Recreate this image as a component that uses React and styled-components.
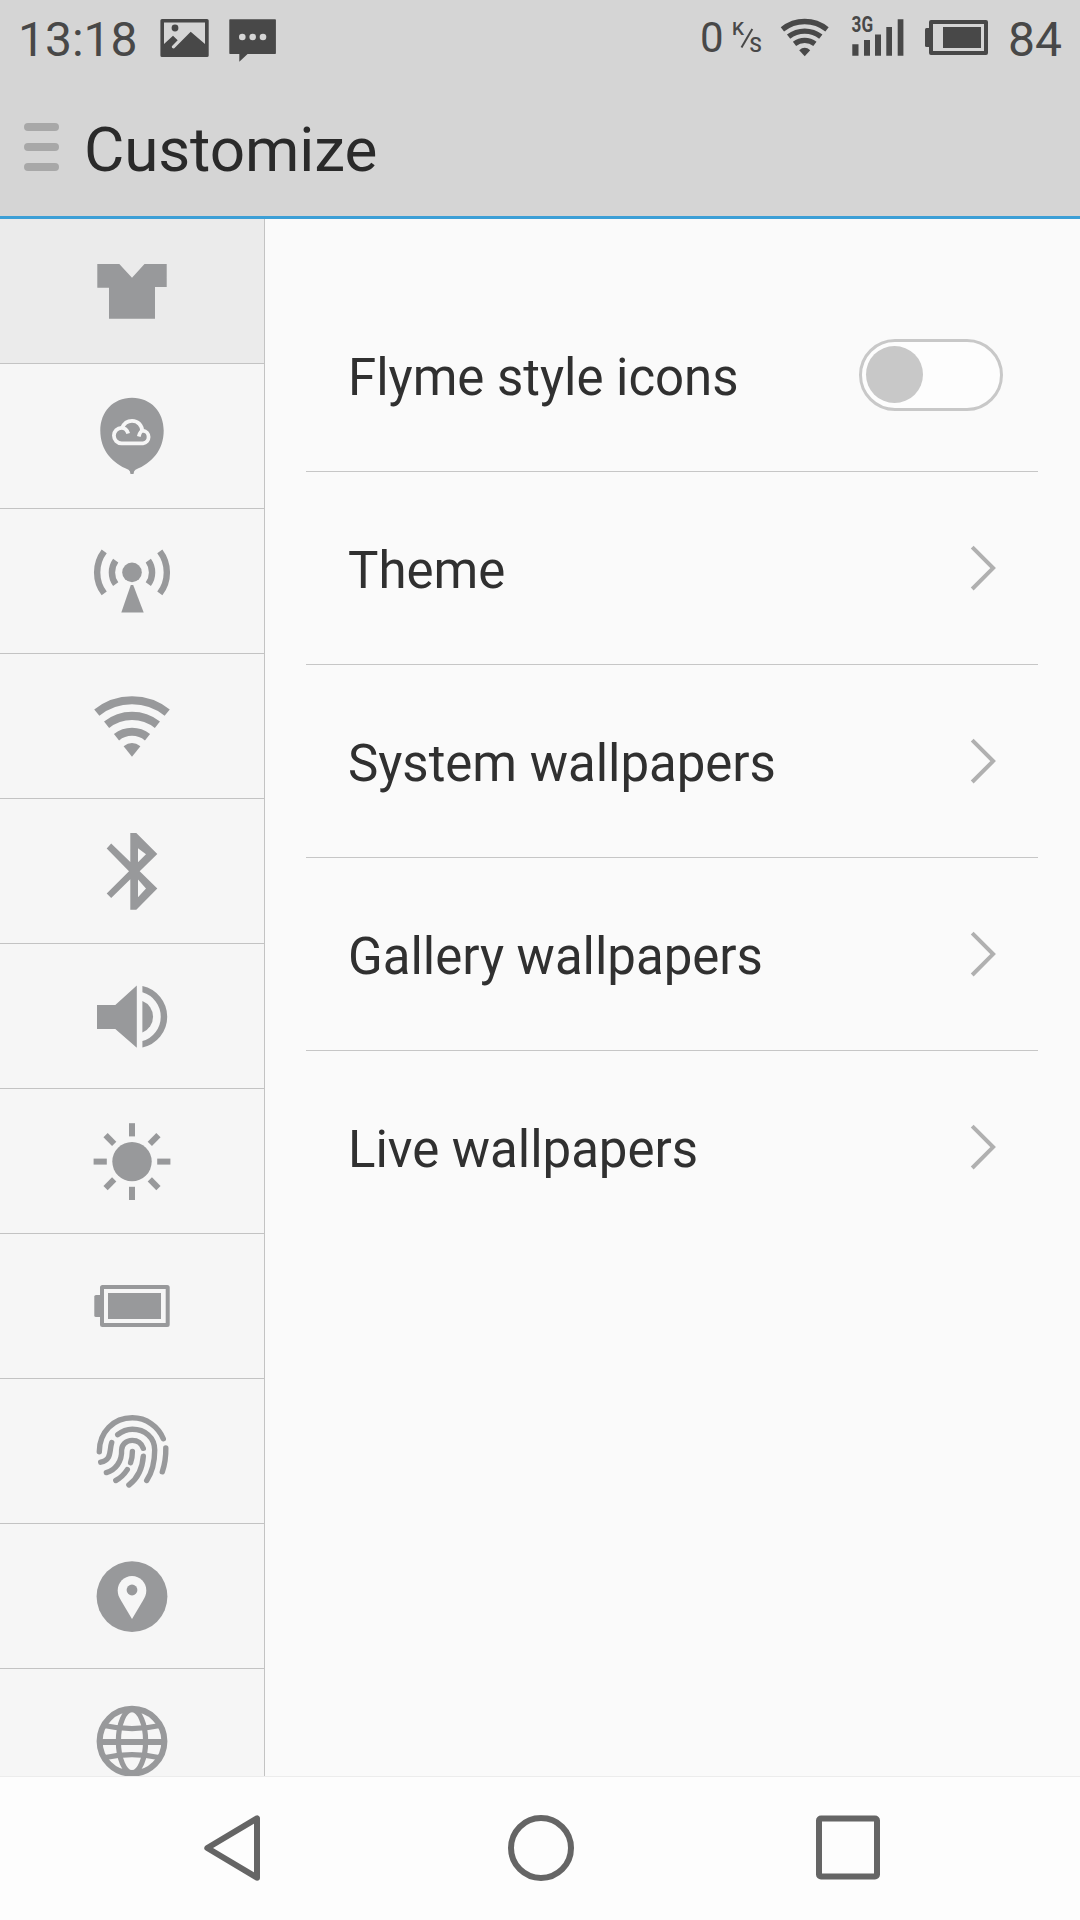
import React from "react";
import styled, { createGlobalStyle } from "styled-components";

const GlobalStyle = createGlobalStyle`
  *, *::before, *::after { box-sizing: border-box; }
  html, body { margin: 0; padding: 0; }
  body { font-family: Roboto, "Noto Sans", sans-serif; background: #fafafa; }
  svg { display: block; flex: none; overflow: visible; }
`;

const Screen = styled.div`
  display: flex;
  flex-direction: column;
  width: 1080px;
  height: 1920px;
  overflow: hidden;
  background: #fafafa;
`;

const Header = styled.header`
  flex: none;
  height: 219px;
  background: #d5d5d5;
  border-bottom: 3px solid #3c9fd6;
`;

const StatusBar = styled.div`
  display: flex;
  align-items: center;
  justify-content: space-between;
  height: 76px;
  padding: 0 18px;
  color: #484848;
`;

const StatusGroup = styled.div`
  display: flex;
  align-items: center;
`;

const StatusText = styled.span`
  font-size: ${(p) => p.$size || 48}px;
  line-height: 56px;
  padding-top: ${(p) => (p.$size ? 0 : 3)}px;
  width: ${(p) => p.$width}px;
  white-space: nowrap;
  text-align: ${(p) => p.$align || "left"};
`;

const StatusIcon = styled.svg.attrs({ fill: "currentColor" })`
  height: 48px;
  margin-right: ${(p) => p.$gap || 0}px;
`;

const SpeedUnit = styled.span`
  display: flex;
  height: 48px;
  width: 48px;
  font-size: 19px;
  line-height: 22px;
  font-weight: 500;
`;

const UnitTop = styled.span`
  padding-top: 4px;
  width: 13px;
`;

const Slash = styled.svg`
  width: 14px;
  height: 48px;
  margin-left: -5px;
`;

const UnitBottom = styled.span`
  align-self: flex-end;
  padding-bottom: 6px;
  margin-left: -4.5px;
  font-size: 20px;
`;

const Toolbar = styled.div`
  display: flex;
  align-items: center;
  gap: 24.5px;
  height: 140px;
  padding: 2px 0 0 24.4px;
`;

const MenuButton = styled.button`
  display: grid;
  gap: 12px;
  width: 35px;
  padding: 0;
  border: 0;
  background: none;
`;

const MenuBar = styled.span`
  height: 8px;
  border-radius: 4px;
  background: #a8a8a8;
`;

const Title = styled.h1`
  margin: 0;
  padding-top: 5px;
  font-size: 62px;
  line-height: 72px;
  font-weight: 400;
  letter-spacing: -0.1px;
  color: #2a2a2a;
`;

const Body = styled.div`
  display: flex;
  flex: none;
  height: 1557px;
  overflow: hidden;
`;

const Sidebar = styled.nav`
  flex: none;
  width: 265px;
  overflow: hidden;
  background: #f6f6f6;
  border-right: 1px solid #c3c3c3;
`;

const Tab = styled.div`
  display: flex;
  align-items: center;
  justify-content: center;
  height: 145px;
  border-bottom: 1px solid #c3c3c3;
  background: ${(p) => (p.$active ? "#ebebeb" : "transparent")};
  color: #98999b;
`;

const Panel = styled.main`
  flex: 1;
  padding: 60px 42px 0 41px;
`;

const Row = styled.div`
  display: flex;
  align-items: center;
  justify-content: space-between;
  height: 193px;
  padding: 0 35px 0 42px;
  border-bottom: 1px solid ${(p) => (p.$last ? "transparent" : "#c6c6c6")};
`;

const Label = styled.span`
  padding-top: 6px;
  font-size: 51px;
  line-height: 60px;
  letter-spacing: -0.03px;
  color: #303030;
  white-space: nowrap;
`;

const Toggle = styled.span`
  display: flex;
  align-items: center;
  width: 144px;
  height: 72px;
  padding: 0 4px 1px;
  border: 3px solid #c8c8c8;
  border-radius: 36px;
  background: #fdfdfd;
`;

const Knob = styled.span`
  width: 57px;
  height: 57px;
  border-radius: 50%;
  background: #c8c8c8;
`;

const Chevron = styled.svg`
  width: 30px;
  height: 48px;
  margin-right: 5px;
`;

const NavBar = styled.footer`
  display: flex;
  align-items: center;
  gap: 236px;
  flex: none;
  height: 144px;
  padding: 0 0 1px 196px;
  border-top: 1px solid #ececec;
  background: #fdfdfd;
  color: #656565;
`;

const NavIcon = styled.svg.attrs({
  viewBox: "0 0.5 72 72",
  width: 72,
  height: 72,
  fill: "none",
  stroke: "currentColor",
  strokeWidth: 6,
})``;

const tabs = [
  {
    id: "theme",
    art: <path d="M5.3 13H27.3L40 26.7L52.5 13H74.7V36H63V67.7H17V36.7H5.3Z" />,
  },
  {
    id: "cloud",
    art: (
      <>
        <path d="M40 1.7C59 1.7 71.7 16 71.7 34.5C71.7 54 60 67 43.5 73.7Q41.8 74.6 41.5 78H38.5Q38.2 74.6 36.5 73.7C20 67 8.3 54 8.3 34.5C8.3 16 21 1.7 40 1.7Z" />
        <g fill="none" stroke="#f6f6f6" strokeWidth="3.8">
          <path d="M36.2 37.5C35 33.8 32.8 31.9 29.6 31.9A7.7 7.7 0 0 0 29.6 47.3H51A6.4 6.4 0 0 0 51 34.6C48.2 34.8 47.6 37.5 46.8 40.5" />
          <path d="M30 32C31.8 27.5 35.5 24.8 40 24.8C46 24.8 50.2 29.5 50.2 35.5" />
        </g>
      </>
    ),
  },
  {
    id: "network",
    art: (
      <>
        <circle cx="40" cy="31.4" r="9.8" />
        <path d="M38.8 44H41.2L51.7 71.4H29.3Z" />
        <g fill="none" stroke="currentColor" strokeWidth="6.4">
          <path d="M12.2 10.4A34.8 34.8 0 0 0 12.2 52.4M23.7 19.7A20 20 0 0 0 23.7 43.1" />
          <path d="M67.8 10.4A34.8 34.8 0 0 1 67.8 52.4M56.3 19.7A20 20 0 0 1 56.3 43.1" />
        </g>
      </>
    ),
  },
  {
    id: "wifi",
    art: (
      <>
        <g fill="none" stroke="currentColor" strokeWidth="8.2">
          <path d="M4.8 26.6A56.3 56.3 0 0 1 75.2 26.6M14.6 38.7A40.7 40.7 0 0 1 65.4 38.7M24.5 51.2A24.8 24.8 0 0 1 55.5 51.2" />
        </g>
        <path d="M40 70.8L31.6 60.2Q40 53.6 48.4 60.2Z" />
      </>
    ),
  },
  {
    id: "bluetooth",
    art: (
      <path
        fillRule="evenodd"
        d="M38.3 2H44.3L65.3 23L47.7 40.2L65.3 57.4L44.3 78.7H38.3V48.3L19.2 66.9L14.7 62.5L37 40.2L14.7 17.6L19.2 12.4L38.3 31ZM46 17.3V31.3L54 23.3ZM46 48.5V66.3L54 57.4Z"
      />
    ),
  },
  {
    id: "sound",
    art: (
      <>
        <path d="M5 29H23.3L44.8 9.6V71.7L23.3 53H5Z" />
        <path d="M50.4 25A16.9 16.9 0 0 1 50.4 56.4Z" />
        <path d="M50.4 10A31.4 31.4 0 0 1 50.4 71.4V65.1A25.4 25.4 0 0 0 50.4 16.3Z" />
      </>
    ),
  },
  {
    id: "brightness",
    art: (
      <>
        <circle cx="40" cy="40.6" r="19.7" />
        <g stroke="currentColor" strokeWidth="6">
          {[0, 45, 90, 135, 180, 225, 270, 315].map((a) => (
            <path
              key={a}
              d={a % 90 ? "M40 15.4V3.2" : "M40 15.4V2.2"}
              transform={`rotate(${a} 40 40.6)`}
            />
          ))}
        </g>
      </>
    ),
  },
  {
    id: "battery",
    art: (
      <>
        <rect x="10" y="21" width="65.7" height="38" rx="0.5" fill="none" stroke="currentColor" strokeWidth="4" strokeLinejoin="round" />
        <rect x="16" y="27" width="53" height="26" />
        <path d="M9 29H4Q2.3 29 2.3 30.5V49.5Q2.3 51 4 51H9Z" />
      </>
    ),
  },
  {
    id: "fingerprint",
    art: (
      <g fill="none" stroke="currentColor" strokeWidth="5.4" strokeLinecap="round">
        <path d="M7.3 40.7C7.3 21 21.5 6.8 40.3 6.8C54.5 6.8 66.2 15.5 71.3 27.7" />
        <path d="M25.7 23.7C30.5 19.8 35.5 18.2 40.3 18.2C53 18.2 62.7 26.5 62.7 39C62.7 51 60 61.5 54.7 69.5" />
        <path d="M73.8 37C74 46 72.6 54 70.3 60.8" />
        <path d="M19.7 31.6C17.2 39 20.2 49 8.7 51.2" />
        <path d="M51.3 37.3C49.5 32.3 45.5 29.4 40.3 29.4C34 29.4 29.6 33.8 29.6 39C30.2 51 23 59 14.4 61.6" />
        <path d="M40.4 40.5Q40.4 46.5 38.6 51.6" />
        <path d="M51.3 45.3C50.5 57 46.5 66.8 36.9 74" />
        <path d="M35.3 58.6Q30.5 66 23.8 69.5" />
      </g>
    ),
  },
  {
    id: "location",
    art: (
      <>
        <circle cx="40" cy="40.6" r="35.4" />
        <path
          fill="#f6f6f6"
          d="M40 20C48 20 54.3 26.5 54.3 34.5C54.3 38.5 53 41 51 44.5L40 63L29 44.5C27 41 25.7 38.5 25.7 34.5C25.7 26.5 32 20 40 20Z"
        />
        <circle cx="40" cy="34" r="5.4" />
      </>
    ),
  },
  {
    id: "language",
    art: (
      <g fill="none" stroke="currentColor">
        <circle cx="40" cy="40.2" r="32.4" strokeWidth="6" />
        <ellipse cx="40" cy="40.2" rx="13.6" ry="31.5" strokeWidth="5.2" />
        <path d="M8 41H72" strokeWidth="5.8" />
        <path d="M12 24.5Q40 30.8 68 24.5M12 56.8Q40 50.4 68 56.8" strokeWidth="5.2" />
      </g>
    ),
  },
];

const rows = [
  { label: "Flyme style icons", toggle: true },
  { label: "Theme" },
  { label: "System wallpapers" },
  { label: "Gallery wallpapers" },
  { label: "Live wallpapers" },
];

function Status() {
  return (
    <StatusBar>
      <StatusGroup>
        <StatusText $width={142}>13:18</StatusText>
        <StatusIcon viewBox="0 -4 49 48" width="49" $gap={19}>
          <path
            fillRule="evenodd"
            d="M2 1H47Q48.7 1 48.7 2.5V37.5Q48.7 39 47 39H2Q.4 39 .4 37.5V2.5Q.4 1 2 1ZM4 4.4V26L13 17.7L17.7 22.2L11.8 28.3Q11.4 31 14.3 30.3L30.7 13.7L45 26V4.4Z"
          />
          <circle cx="15" cy="10" r="3.4" />
        </StatusIcon>
        <StatusIcon viewBox="0 -4 49 48" width="49">
          <path d="M2 1.3H47.2Q47.9 1.3 47.9 2V35.2Q47.9 36 47.2 36H19.6L11.3 43.8V36H2Q1.3 36 1.3 35.2V2Q1.3 1.3 2 1.3Z" />
          <g fill="#d6d6d6">
            <circle cx="14.3" cy="19" r="3.3" />
            <circle cx="24.7" cy="19" r="3.3" />
            <circle cx="35" cy="19" r="3.3" />
          </g>
        </StatusIcon>
      </StatusGroup>
      <StatusGroup>
        <StatusText $size={42} $width={32}>0</StatusText>
        <SpeedUnit>
          <UnitTop>K</UnitTop>
          <Slash viewBox="0 0 14 48" stroke="currentColor" strokeWidth="2">
            <path d="M12.3 15L1.5 33.5" />
          </Slash>
          <UnitBottom>S</UnitBottom>
        </SpeedUnit>
        <StatusIcon viewBox="0 -2 50 48" width="50" $gap={20}>
          <g fill="none" stroke="currentColor" strokeWidth="5.3">
            <path d="M2.4 13.4A35.5 35.5 0 0 1 47 13.4M8.6 20.7A26 26 0 0 1 40.8 20.7M14.5 27.8A16.7 16.7 0 0 1 34.9 27.8" />
          </g>
          <path d="M24.7 40.2L19.2 34.2Q24.7 29.4 30.2 34.2Z" />
        </StatusIcon>
        <StatusIcon viewBox="0 0 56 48" width="56" $gap={18}>
          <path d="M2.3 30.3H8.5V41.7H2.3ZM14 26H20V41.7H14ZM25 20.4H31V41.7H25ZM36.3 13H42V41.7H36.3ZM47.7 5.3H53.4V41.7H47.7Z" />
          <text x="1.6" y="18.2" fontSize="22" fontWeight="700" textLength="21.5" lengthAdjust="spacingAndGlyphs">
            3G
          </text>
        </StatusIcon>
        <StatusIcon viewBox="0 -4 66 48" width="66">
          <rect x="7" y="4" width="55" height="31" fill="none" stroke="currentColor" strokeWidth="4" strokeLinejoin="round" />
          <rect x="19" y="9" width="38" height="21" />
          <path d="M6 10H2.5Q1 10 1 11.5V27.5Q1 29 2.5 29H6Z" />
        </StatusIcon>
        <StatusText $width={72} $align="right">84</StatusText>
      </StatusGroup>
    </StatusBar>
  );
}

export default function App() {
  return (
    <Screen>
      <GlobalStyle />
      <Header>
        <Status />
        <Toolbar>
          <MenuButton aria-label="Menu">
            <MenuBar />
            <MenuBar />
            <MenuBar />
          </MenuButton>
          <Title>Customize</Title>
        </Toolbar>
      </Header>
      <Body>
        <Sidebar>
          {tabs.map((tab, i) => (
            <Tab key={tab.id} $active={i === 0}>
              <svg width="80" height="80" viewBox="0 0 80 80" fill="currentColor">
                {tab.art}
              </svg>
            </Tab>
          ))}
        </Sidebar>
        <Panel>
          {rows.map((row, i) => (
            <Row key={row.label} $last={i === rows.length - 1}>
              <Label>{row.label}</Label>
              {row.toggle ? (
                <Toggle>
                  <Knob />
                </Toggle>
              ) : (
                <Chevron viewBox="0 0 30 48" fill="none" stroke="#b0b0b0" strokeWidth="4">
                  <path d="M4.2 3.2L25.1 24.1L4.2 45" />
                </Chevron>
              )}
            </Row>
          ))}
        </Panel>
      </Body>
      <NavBar>
        <NavIcon strokeLinejoin="round">
          <path d="M11.3 36.5L61 6.8V66.2Z" />
        </NavIcon>
        <NavIcon>
          <circle cx="37" cy="36.5" r="30" />
        </NavIcon>
        <NavIcon>
          <rect x="7" y="7" width="58" height="58" rx="2" />
        </NavIcon>
      </NavBar>
    </Screen>
  );
}
